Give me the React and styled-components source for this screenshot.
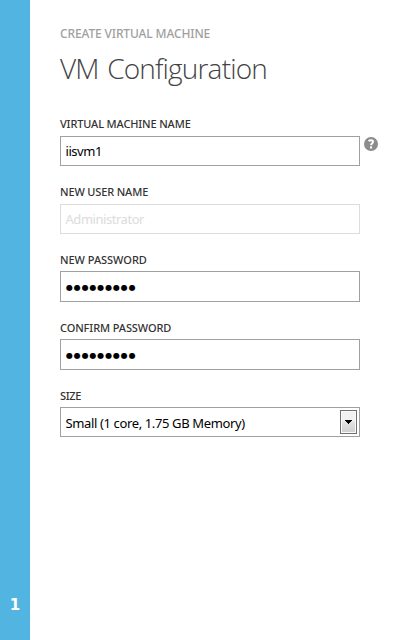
import React from 'react';
import styled, { createGlobalStyle } from 'styled-components';

const GlobalStyle = createGlobalStyle`
  * { box-sizing: border-box; }
  body { margin: 0; background: #fff; font-family: "Noto Sans", "Open Sans", sans-serif; }
`;

const Page = styled.div`
  display: flex;
  width: 405px;
  height: 640px;
  overflow: hidden;
  background: #fff;
`;

const StepRail = styled.aside`
  display: flex;
  flex: none;
  align-items: flex-end;
  justify-content: center;
  width: 30px;
  padding-bottom: 25px;
  background: #52b5e1;
`;

const StepNumber = styled.span`
  color: #fff;
  font: 700 15px/20px "DejaVu Sans", sans-serif;
`;

const Content = styled.main`
  flex: 1;
  padding: 25px 0 0 30px;
`;

const Eyebrow = styled.div`
  height: 18px;
  color: #a0a0a0;
  font-size: 12px;
  font-weight: 500;
  line-height: 18px;
  letter-spacing: -0.13px;
  white-space: nowrap;
`;

const Title = styled.h1`
  height: 40px;
  margin: 5px 0 28px;
  color: #444;
  font: 300 28px/40px "Open Sans", "Noto Sans", sans-serif;
  letter-spacing: -0.82px;
  word-spacing: 2px;
  white-space: nowrap;
`;

const Form = styled.form`
  display: flex;
  flex-direction: column;
`;

const Field = styled.div`
  height: 68px;
`;

const Label = styled.label`
  display: block;
  height: ${(p) => p.$height || 20}px;
  color: #333;
  font-size: 11px;
  font-weight: 500;
  line-height: 16px;
  letter-spacing: ${(p) => p.$tracking ?? -0.14}px;
  white-space: nowrap;
`;

const Row = styled.div`
  display: flex;
  gap: 4px;
`;

const Box = styled.div`
  display: flex;
  align-items: center;
  justify-content: space-between;
  width: 300px;
  height: ${(p) => p.$height || 30}px;
  padding: 0 2px 0 5px;
  border: 1px solid ${(p) => (p.$disabled ? '#dcdcdc' : '#a0a0a0')};
  background: #fff;
  color: ${(p) => (p.$disabled ? '#dcdcdc' : '#000')};
`;

const Value = styled.span`
  padding-top: ${(p) => p.$drop || 0}px;
  margin-left: -0.5px;
  font-size: 13px;
  line-height: 20px;
  letter-spacing: ${(p) => p.$tracking ?? -0.46}px;
  white-space: nowrap;
`;

const Dots = styled.span`
  padding-top: 3px;
  font: 8px/16px "DejaVu Sans", sans-serif;
  letter-spacing: 0.85px;
`;

const HelpIcon = styled.svg`
  flex: none;
  width: 14px;
  height: 14px;
  margin-top: 1px;
`;

const DropButton = styled.span`
  display: flex;
  align-items: center;
  justify-content: center;
  width: 17px;
  height: 24px;
  border: 1px solid #707070;
  background: linear-gradient(#f2f2f2 0 45%, #e2e2e2 50%, #cfcfcf);
  box-shadow: inset 0 0 0 1px #fafafa;
`;

function Help() {
  return (
    <HelpIcon viewBox="0 0 14 14" aria-label="Help">
      <circle cx="7" cy="7" r="7" fill="#8c8c8c" />
      <path d="M4.6 4.2C5.3 3.4 6.2 3.2 7.1 3.2c1.2 0 2 .6 2 1.5 0 1.5-2 1.5-2 3.6" fill="none" stroke="#fff" strokeWidth="2" />
      <rect x="6" y="9.4" width="2.1" height="2.1" fill="#fff" />
    </HelpIcon>
  );
}

export default function App() {
  return (
    <Page>
      <GlobalStyle />
      <StepRail><StepNumber>1</StepNumber></StepRail>
      <Content>
        <Eyebrow>CREATE VIRTUAL MACHINE</Eyebrow>
        <Title>VM Configuration</Title>
        <Form>
          <Field>
            <Label>VIRTUAL MACHINE NAME</Label>
            <Row><Box><Value>iisvm1</Value></Box><Help /></Row>
          </Field>
          <Field>
            <Label>NEW USER NAME</Label>
            <Box $disabled><Value>Administrator</Value></Box>
          </Field>
          <Field>
            <Label $height={19} $tracking={-0.03}>NEW PASSWORD</Label>
            <Box $height={31}><Dots>●●●●●●●●●</Dots></Box>
          </Field>
          <Field>
            <Label $height={19} $tracking={-0.1}>CONFIRM PASSWORD</Label>
            <Box $height={31}><Dots>●●●●●●●●●</Dots></Box>
          </Field>
          <Field>
            <Label $height={19} $tracking={-0.3}>SIZE</Label>
            <Box>
              <Value $tracking={-0.37} $drop={2}>Small (1 core, 1.75 GB Memory)</Value>
              <DropButton>
                <svg width="7" height="4" viewBox="0 0 7 4" shapeRendering="crispEdges">
                  <path d="M0 0h7v1H6v1H5v1H4v1H3V3H2V2H1V1H0z" />
                </svg>
              </DropButton>
            </Box>
          </Field>
        </Form>
      </Content>
    </Page>
  );
}
